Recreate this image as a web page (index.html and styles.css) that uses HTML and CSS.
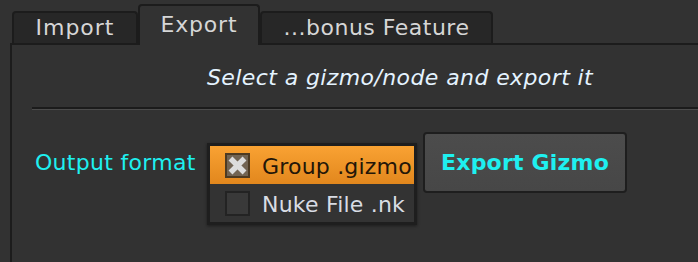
FILE: index.html
```html
<!DOCTYPE html>
<html>
<head>
<meta charset="utf-8">
<link rel="stylesheet" href="styles.css">
</head>
<body>
<div class="tabbar">
  <div class="tab tab-import">Import</div>
  <div class="tab tab-active tab-export">Export</div>
  <div class="tab tab-bonus">...bonus Feature</div>
</div>
<div class="pane">
  <div class="title">Select a gizmo/node and export it</div>
  <div class="sep"></div>
  <div class="row">
    <span class="label">Output format</span>
    <div class="menu">
      <div class="item item-on">
        <span class="check check-on"><svg width="21" height="21" viewBox="0 0 21 21"><path d="M3.5 3.5 L17.5 17.5 M17.5 3.5 L3.5 17.5" stroke="#dcdcdc" stroke-width="5.5" fill="none"/></svg></span>
        <span class="item-text">Group .gizmo</span>
      </div>
      <div class="item">
        <span class="check"></span>
        <span class="item-text">Nuke File .nk</span>
      </div>
    </div>
    <button class="btn">Export Gizmo</button>
  </div>
</div>
</body>
</html>
```
FILE: styles.css
```css
html, body {
  margin: 0;
  padding: 0;
  background: #323232;
  width: 698px;
  height: 262px;
  overflow: hidden;
  font-family: "DejaVu Sans", Verdana, sans-serif;
  font-size: 22px;
  line-height: 26px;
  letter-spacing: 0.4px;
}
.tabbar {
  display: flex;
  align-items: flex-end;
  height: 43px;
  padding-left: 12px;
}
.tab {
  box-sizing: border-box;
  height: 32px;
  padding-top: 2px;
  text-align: center;
  color: #d6d6d6;
  background: #272727;
  border: 2px solid #1c1c1c;
  border-bottom: none;
  border-radius: 4px 4px 0 0;
  white-space: nowrap;
}
.tab-import { width: 126px; letter-spacing: 1px; }
.tab-export { width: 122px; letter-spacing: 0.8px; }
.tab-bonus { width: 233px; letter-spacing: 0.5px; }
.tab-active {
  height: 41px;
  padding-top: 6px;
  margin-bottom: -2px;
  background: #323232;
  position: relative;
  z-index: 1;
}
.pane {
  margin-left: 10px;
  border-left: 2px solid #1c1c1c;
  border-top: 2px solid #1c1c1c;
  height: 219px;
  box-sizing: border-box;
}
.title {
  margin-top: 20px;
  padding-left: 195px;
  font-style: italic;
  color: #e4f3ff;
  white-space: nowrap;
}
.sep {
  margin-top: 16px;
  margin-left: 20px;
  height: 0;
  border-top: 2px solid #1b1b1b;
  border-bottom: 1px solid #4c4c4c;
}
.row {
  display: flex;
  align-items: flex-start;
  margin-top: 22px;
}
.label {
  flex: none;
  width: 172px;
  margin-left: 23px;
  margin-top: 18px;
  color: #1ef0f0;
  white-space: nowrap;
  letter-spacing: 0.3px;
}
.menu {
  flex: none;
  box-sizing: border-box;
  margin-top: 11px;
  width: 210px;
  border: 3px solid #1e1e1e;
  background: #333333;
  box-shadow: 0 1px 3px rgba(0,0,0,0.45);
}
.item {
  display: flex;
  align-items: center;
  height: 38px;
  padding-left: 15px;
  color: #d8dce4;
  white-space: nowrap;
  overflow: hidden;
  letter-spacing: 0.2px;
}
.item-text {
  padding-top: 3px;
}
.item-on {
  background: linear-gradient(#f9a233, #e2871d);
  color: #231608;
}
.check {
  box-sizing: border-box;
  flex: none;
  width: 25px;
  height: 25px;
  border: 2px solid #232323;
  background: #393939;
  margin-right: 12px;
}
.check svg { display: block; }
.check-on {
  border-color: #4d3a22;
  background: #726453;
}
.btn {
  flex: none;
  box-sizing: border-box;
  margin-left: 6px;
  width: 204px;
  height: 61px;
  font-family: inherit;
  font-size: 22px;
  font-weight: bold;
  letter-spacing: 0.2px;
  color: #1ef0f0;
  background: linear-gradient(#4c4c4c, #474747);
  border: 2px solid #1e1e1e;
  border-radius: 4px;
  padding: 0;
}
```
